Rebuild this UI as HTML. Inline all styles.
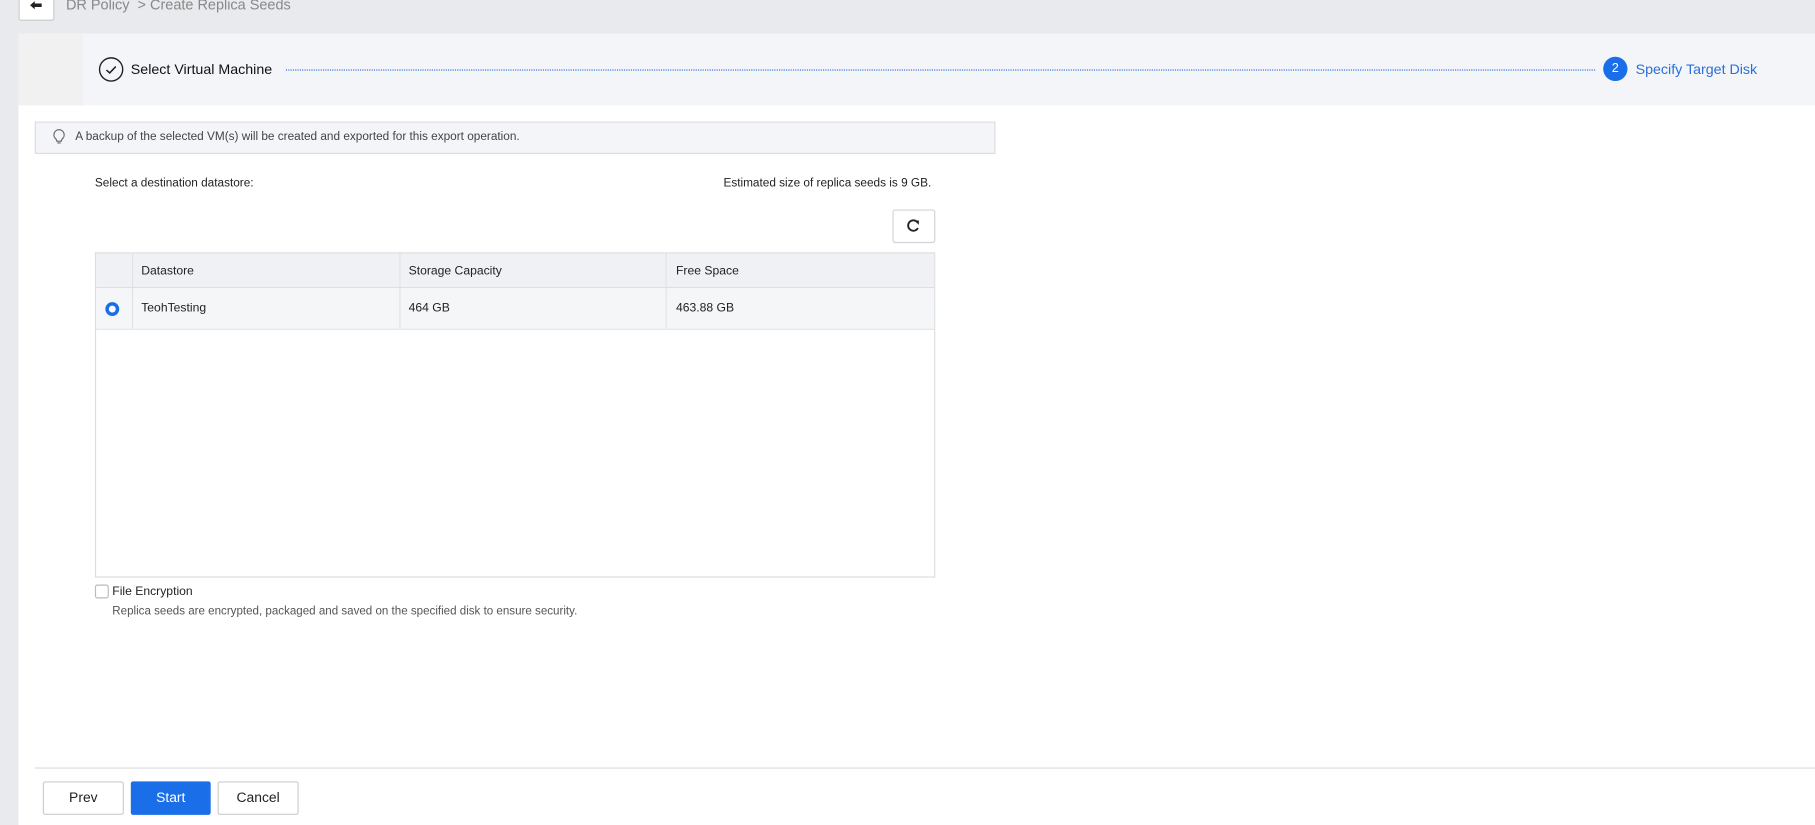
<!DOCTYPE html>
<html><head><meta charset="utf-8"><style>
html,body{margin:0;padding:0;width:1815px;height:825px;overflow:hidden;background:#fff}
#w{position:absolute;left:0;top:0;width:1568px;height:713px;transform:scale(1.15753);transform-origin:0 0;font-family:"Liberation Sans",Arial,sans-serif;background:#e9eaee}
.a{position:absolute}
.t{font-size:10.5px;color:#222}
</style></head><body><div id="w">
<div class="a" style="left:16px;top:-6px;width:29px;height:22px;background:#fff;border:1px solid #ccc;border-radius:2px"></div>
<svg class="a" style="left:25px;top:0" width="12" height="10"><path d="M1 4.5 L5 1 L5 3 L11 3 L11 6 L5 6 L5 8 Z" fill="#222"/></svg>
<div class="a" style="left:57px;top:-3px;font-size:12.5px;color:#888">DR Policy &nbsp;&gt; Create Replica Seeds</div>
<div class="a" style="left:16px;top:29px;width:1552px;height:684px;background:#fff"></div>
<div class="a" style="left:16px;top:29px;width:1552px;height:62px;background:#f4f5f8"></div>
<div class="a" style="left:16px;top:29px;width:56px;height:62px;background:#f1f1f2"></div>
<svg class="a" style="left:85px;top:49px" width="22" height="22"><circle cx="11" cy="11" r="10" fill="none" stroke="#222" stroke-width="1.2"/><path d="M7 11.5 L9.8 14 L15 8.5" fill="none" stroke="#222" stroke-width="1.3"/></svg>
<div class="a" style="left:113px;top:53px;font-size:12.3px;color:#111">Select Virtual Machine</div>
<div class="a" style="left:247px;top:60px;width:1131px;border-top:1px dotted #2a6fdb"></div>
<div class="a" style="left:1385px;top:49px;width:21px;height:21px;border-radius:50%;background:#1a6fe8;color:#fff;font-size:11px;text-align:center;line-height:21px">2</div>
<div class="a" style="left:1413px;top:53px;font-size:12.3px;color:#2a6fdb">Specify Target Disk</div>
<div class="a" style="left:30px;top:105px;width:828px;height:26px;background:#f4f5f8;border:1px solid #dcdde0"></div>
<svg class="a" style="left:45px;top:111px" width="12" height="14"><path d="M6 1 A4.5 4.5 0 0 0 3.5 9.2 L4 11 L8 11 L8.5 9.2 A4.5 4.5 0 0 0 6 1 Z M4.5 12.5 L7.5 12.5" fill="none" stroke="#666" stroke-width="1"/></svg>
<div class="a t" style="left:65px;top:113px;font-size:10.2px;color:#444">A backup of the selected VM(s) will be created and exported for this export operation.</div>
<div class="a t" style="left:82px;top:153px;font-size:10.2px">Select a destination datastore:</div>
<div class="a t" style="left:625px;top:153px;font-size:10.2px">Estimated size of replica seeds is 9 GB.</div>
<div class="a" style="left:771px;top:181px;width:35px;height:27px;border:1px solid #d3d4d8;border-radius:2px;background:#fff"></div>
<svg class="a" style="left:782px;top:188px" width="14" height="14"><path d="M10.5 4 A4.5 4.5 0 1 0 11 9" fill="none" stroke="#222" stroke-width="1.6"/><path d="M8 2.5 L11.8 2.5 L11.8 6.3 Z" fill="#222"/></svg>
<div class="a" style="left:82px;top:218px;width:724px;height:279px;border:1px solid #dcdde0"></div>
<div class="a" style="left:83px;top:219px;width:724px;height:29px;background:#f0f1f4;border-bottom:1px solid #dcdde0"></div>
<div class="a" style="left:83px;top:249px;width:724px;height:35px;background:#f5f6f8;border-bottom:1px solid #e4e5e8"></div>
<div class="a" style="left:114px;top:219px;height:65px;border-left:1px solid #e1e2e5"></div>
<div class="a" style="left:345px;top:219px;height:65px;border-left:1px solid #e1e2e5"></div>
<div class="a" style="left:575px;top:219px;height:65px;border-left:1px solid #e1e2e5"></div>
<div class="a t" style="left:122px;top:228px">Datastore</div>
<div class="a t" style="left:353px;top:228px">Storage Capacity</div>
<div class="a t" style="left:584px;top:228px">Free Space</div>
<div class="a" style="left:91px;top:261px;width:6px;height:6px;border:3px solid #1a6fe8;border-radius:50%;background:#fff"></div>
<div class="a t" style="left:122px;top:260px">TeohTesting</div>
<div class="a t" style="left:353px;top:260px">464 GB</div>
<div class="a t" style="left:584px;top:260px">463.88 GB</div>
<div class="a" style="left:82px;top:505px;width:10px;height:10px;border:1px solid #bbb;border-radius:2px;background:#fff"></div>
<div class="a t" style="left:97px;top:505px">File Encryption</div>
<div class="a t" style="left:97px;top:523px;font-size:10px;color:#555">Replica seeds are encrypted, packaged and saved on the specified disk to ensure security.</div>
<div class="a" style="left:30px;top:663px;width:1538px;border-top:1px solid #dcdde0"></div>
<div class="a" style="left:37px;top:675px;width:68px;height:27px;border:1px solid #ccc;border-radius:2px;background:#fff;font-size:12px;text-align:center;line-height:27px;color:#222">Prev</div>
<div class="a" style="left:113px;top:675px;width:69px;height:29px;border-radius:2px;background:#1a6fe8;font-size:12px;text-align:center;line-height:29px;color:#fff">Start</div>
<div class="a" style="left:188px;top:675px;width:68px;height:27px;border:1px solid #ccc;border-radius:2px;background:#fff;font-size:12px;text-align:center;line-height:27px;color:#222">Cancel</div>
</div></body></html>
